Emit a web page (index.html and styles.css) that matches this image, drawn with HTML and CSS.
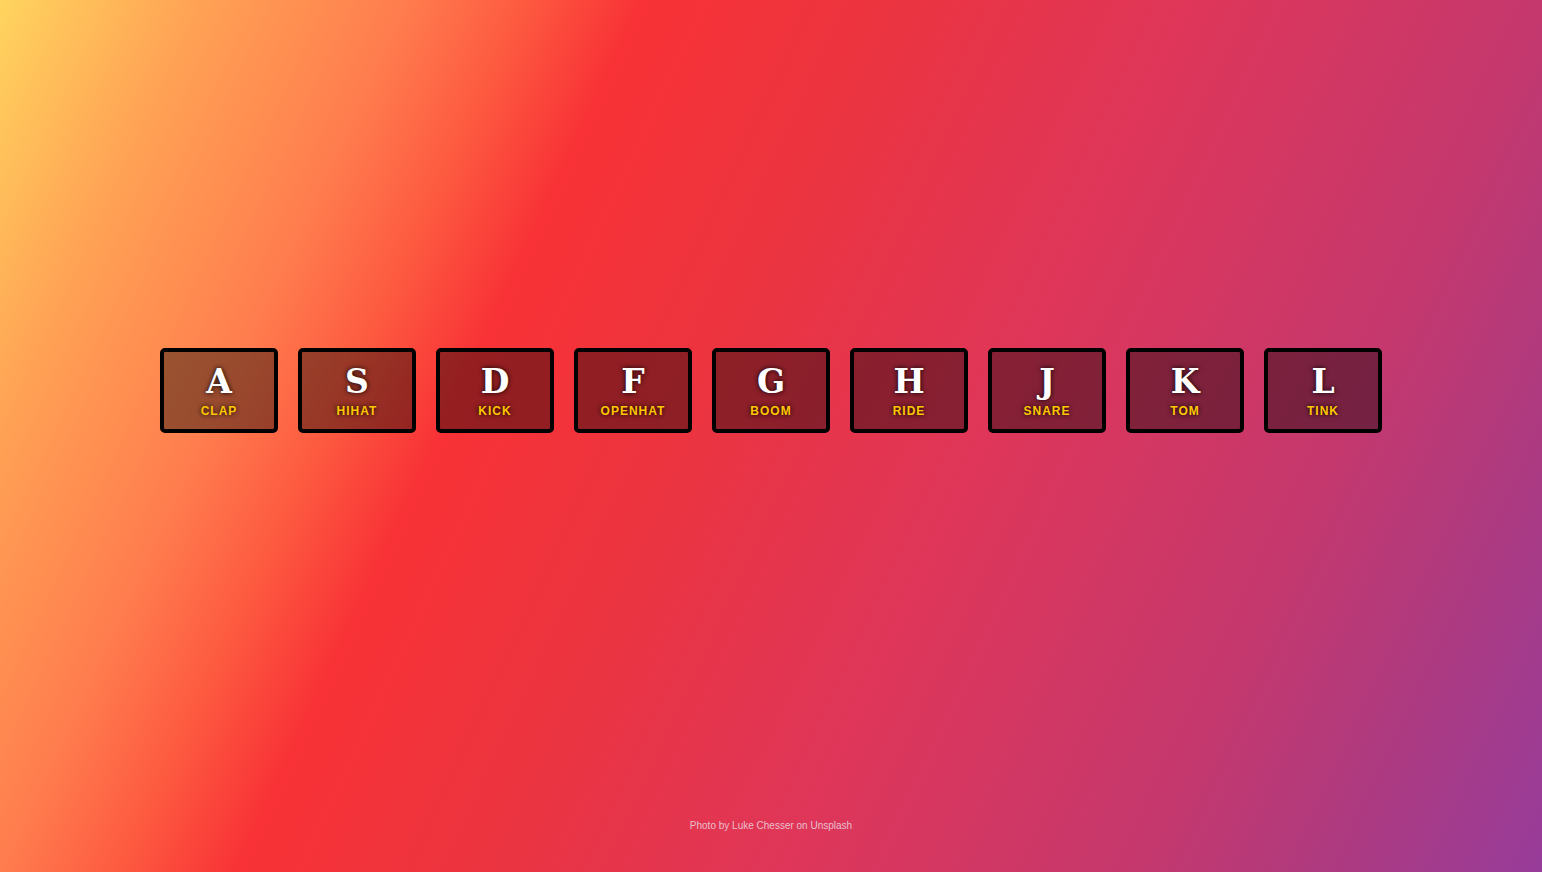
FILE: index.html
```html
<!DOCTYPE html>
<html lang="en">
<head>
<meta charset="UTF-8">
<title>JS Drum Kit</title>
<link rel="stylesheet" href="styles.css">
</head>
<body>
<main class="keys">
  <div class="key"><kbd class="letter">A</kbd><span class="sound">clap</span></div>
  <div class="key"><kbd class="letter">S</kbd><span class="sound">hihat</span></div>
  <div class="key"><kbd class="letter">D</kbd><span class="sound">kick</span></div>
  <div class="key"><kbd class="letter">F</kbd><span class="sound">openhat</span></div>
  <div class="key"><kbd class="letter">G</kbd><span class="sound">boom</span></div>
  <div class="key"><kbd class="letter">H</kbd><span class="sound">ride</span></div>
  <div class="key"><kbd class="letter">J</kbd><span class="sound">snare</span></div>
  <div class="key"><kbd class="letter">K</kbd><span class="sound">tom</span></div>
  <div class="key"><kbd class="letter">L</kbd><span class="sound">tink</span></div>
</main>
<footer class="credit">Photo by Luke Chesser on Unsplash</footer>
</body>
</html>
```
FILE: styles.css
```css
*, *::before, *::after { box-sizing: border-box; }
html, body { margin: 0; height: 100%; }
body {
  display: flex;
  flex-direction: column;
  font-family: "Liberation Sans", Arial, sans-serif;
  background: linear-gradient(115deg,
    #ffd45e 0%,
    #ffa355 10%,
    #ff7c4e 21%,
    #fd5a40 27%,
    #f83236 33%,
    #ec343f 45%,
    #df3659 61%,
    #c5386d 79%,
    #b03a7e 88%,
    #973c9a 100%);
}
.keys {
  flex: 1;
  display: flex;
  align-items: center;
  justify-content: center;
  gap: 20px;
}
.key {
  width: 118px;
  height: 85px;
  border: 4px solid #000;
  border-radius: 5px;
  padding: 10px 5px;
  background: rgba(0, 0, 0, 0.4);
  text-align: center;
  display: flex;
  flex-direction: column;
  align-items: center;
  text-shadow: 0 0 5px #000;
}
.letter {
  display: block;
  font-family: "DejaVu Serif", "Liberation Serif", serif;
  font-weight: bold;
  font-size: 33px;
  line-height: 40px;
  height: 42px;
  color: #fff;
}
.sound {
  display: block;
  font-size: 12px;
  line-height: 14px;
  font-weight: bold;
  letter-spacing: 1px;
  text-transform: uppercase;
  color: #ffc600;
}
.credit {
  height: 91px;
  padding-bottom: 2px;
  display: flex;
  align-items: center;
  justify-content: center;
  font-size: 10px;
  color: rgba(235, 220, 225, 0.85);
}
```
